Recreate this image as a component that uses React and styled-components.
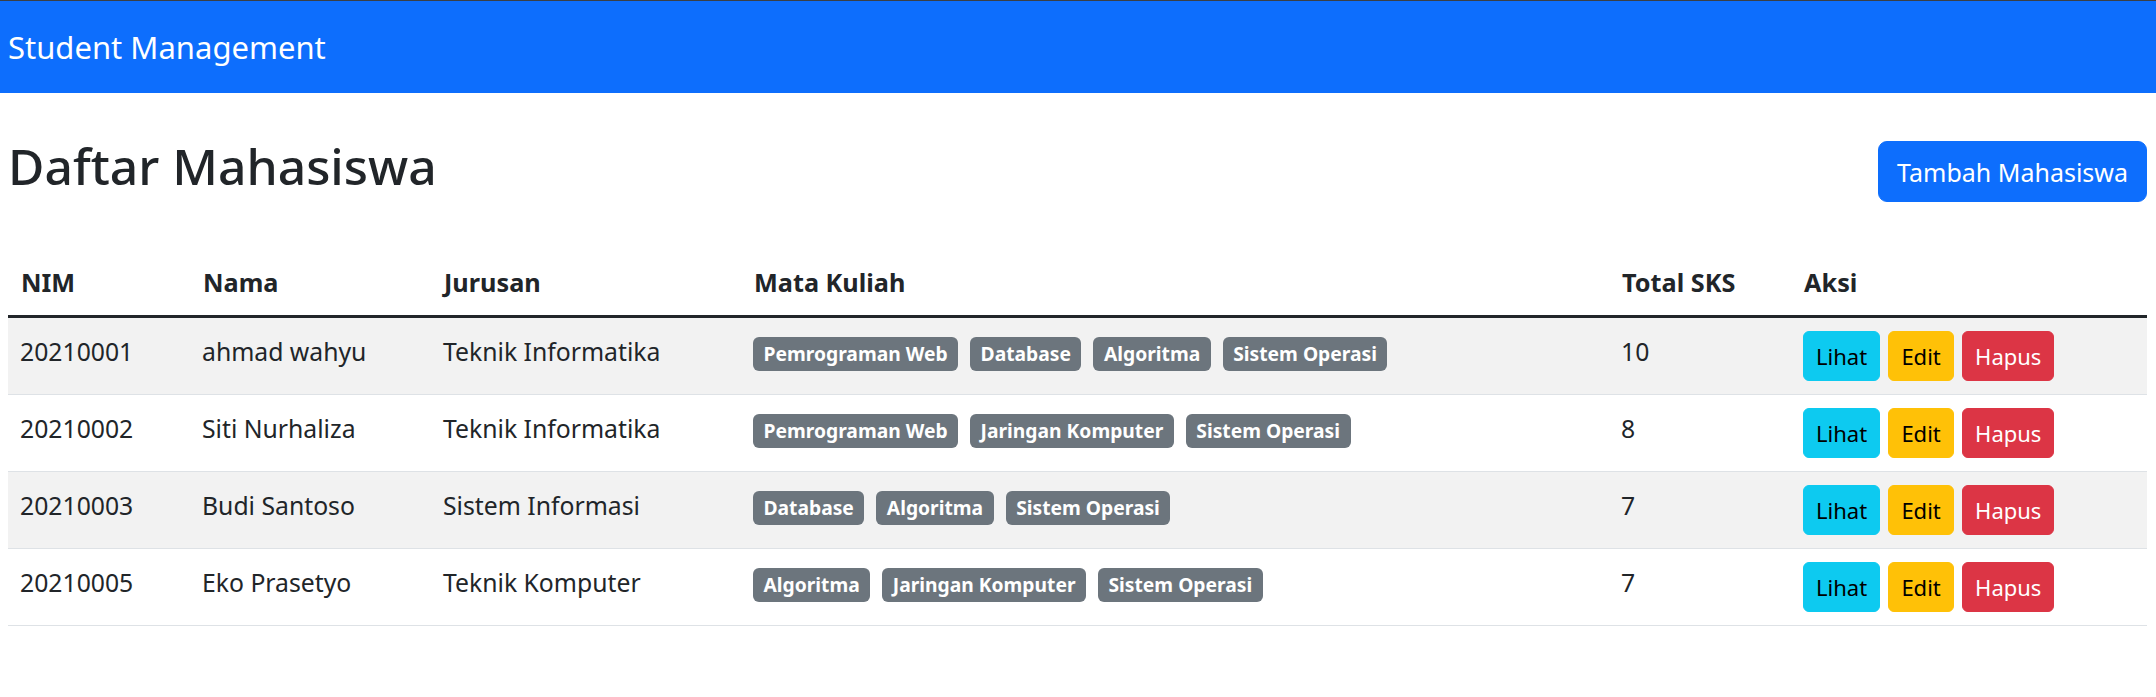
import React from "react";
import styled, { createGlobalStyle } from "styled-components";

const GlobalStyle = createGlobalStyle`
  html, body { margin: 0; padding: 0; background: #fff; }
  body {
    font-family: "Noto Sans", "Open Sans", sans-serif;
    color: #212529;
    -webkit-font-smoothing: antialiased;
  }
  * { box-sizing: border-box; }
`;

const NavBar = styled.nav`
  height: 93px;
  border-top: 1px solid #3a3f44;
  background: #0d6efd;
  display: flex;
  align-items: center;
  padding-left: 8px;
`;

const Brand = styled.a`
  color: #fff;
  font-size: 31px;
  line-height: 1.5;
  text-decoration: none;
`;

const Page = styled.main`
  padding: 40px 9px 0 8px;
`;

const HeaderRow = styled.div`
  display: flex;
  justify-content: space-between;
  align-items: center;
  margin-bottom: 43px;
`;

const Title = styled.h1`
  margin: 0 0 11px;
  font-size: 49.8px;
  font-weight: 500;
  line-height: 66px;
  color: #212529;
`;

const PrimaryButton = styled.button`
  height: 61px;
  padding: 0 18px;
  border: 1px solid #0d6efd;
  border-radius: 9px;
  background: #0d6efd;
  color: #fff;
  font-family: inherit;
  font-size: 25px;
  cursor: pointer;
`;

const Table = styled.table`
  width: 100%;
  table-layout: fixed;
  border-collapse: collapse;
  font-size: 24.75px;
`;

const HeadCell = styled.th`
  text-align: left;
  font-weight: 700;
  font-size: 25.25px;
  line-height: 37px;
  padding: 11px 11px 14px 13px;
  border-bottom: 3px solid #212529;
  white-space: nowrap;
`;

const Row = styled.tr`
  background: ${(p) => (p.$striped ? "#f2f2f2" : "#fff")};
`;

const Cell = styled.td`
  vertical-align: top;
  padding: 13px 11px 13px 12px;
  border-bottom: 1px solid #dee2e6;
  line-height: 42px;
  color: #212529;
  white-space: nowrap;
`;

const TagList = styled.div`
  display: flex;
  gap: 12px;
  margin-top: 6px;
`;

const Tag = styled.span`
  display: inline-block;
  background: #6c757d;
  color: #fff;
  font-size: 19.25px;
  font-weight: 700;
  line-height: 1;
  padding: 7.4px 10.5px;
  border-radius: 6px;
`;

const Actions = styled.div`
  display: flex;
  gap: 8px;
`;

const variants = {
  info: { bg: "#0dcaf0", fg: "#000" },
  warning: { bg: "#ffc107", fg: "#000" },
  danger: { bg: "#dc3545", fg: "#fff" },
};

const ActionButton = styled.button`
  height: 50px;
  min-width: 66px;
  padding: 0 12px;
  border: 1px solid ${(p) => variants[p.$variant].bg};
  border-radius: 6px;
  background: ${(p) => variants[p.$variant].bg};
  color: ${(p) => variants[p.$variant].fg};
  font-family: inherit;
  font-size: 22px;
  line-height: 1.5;
  cursor: pointer;
`;

const columns = [
  { label: "NIM", width: 182 },
  { label: "Nama", width: 241 },
  { label: "Jurusan", width: 310 },
  { label: "Mata Kuliah", width: 868 },
  { label: "Total SKS", width: 182 },
  { label: "Aksi", width: 356 },
];

const students = [
  {
    nim: "20210001",
    nama: "ahmad wahyu",
    jurusan: "Teknik Informatika",
    mk: ["Pemrograman Web", "Database", "Algoritma", "Sistem Operasi"],
    sks: 10,
  },
  {
    nim: "20210002",
    nama: "Siti Nurhaliza",
    jurusan: "Teknik Informatika",
    mk: ["Pemrograman Web", "Jaringan Komputer", "Sistem Operasi"],
    sks: 8,
  },
  {
    nim: "20210003",
    nama: "Budi Santoso",
    jurusan: "Sistem Informasi",
    mk: ["Database", "Algoritma", "Sistem Operasi"],
    sks: 7,
  },
  {
    nim: "20210005",
    nama: "Eko Prasetyo",
    jurusan: "Teknik Komputer",
    mk: ["Algoritma", "Jaringan Komputer", "Sistem Operasi"],
    sks: 7,
  },
];

export default function App() {
  return (
    <>
      <GlobalStyle />
      <NavBar>
        <Brand href="#">Student Management</Brand>
      </NavBar>
      <Page>
        <HeaderRow>
          <Title>Daftar Mahasiswa</Title>
          <PrimaryButton>Tambah Mahasiswa</PrimaryButton>
        </HeaderRow>
        <Table>
          <colgroup>
            {columns.map((c) => (
              <col key={c.label} style={{ width: c.width }} />
            ))}
          </colgroup>
          <thead>
            <tr>
              {columns.map((c) => (
                <HeadCell key={c.label}>{c.label}</HeadCell>
              ))}
            </tr>
          </thead>
          <tbody>
            {students.map((s, i) => (
              <Row key={s.nim} $striped={i % 2 === 0}>
                <Cell>{s.nim}</Cell>
                <Cell>{s.nama}</Cell>
                <Cell>{s.jurusan}</Cell>
                <Cell>
                  <TagList>
                    {s.mk.map((m) => (
                      <Tag key={m}>{m}</Tag>
                    ))}
                  </TagList>
                </Cell>
                <Cell>{s.sks}</Cell>
                <Cell>
                  <Actions>
                    <ActionButton $variant="info">Lihat</ActionButton>
                    <ActionButton $variant="warning">Edit</ActionButton>
                    <ActionButton $variant="danger">Hapus</ActionButton>
                  </Actions>
                </Cell>
              </Row>
            ))}
          </tbody>
        </Table>
      </Page>
    </>
  );
}
